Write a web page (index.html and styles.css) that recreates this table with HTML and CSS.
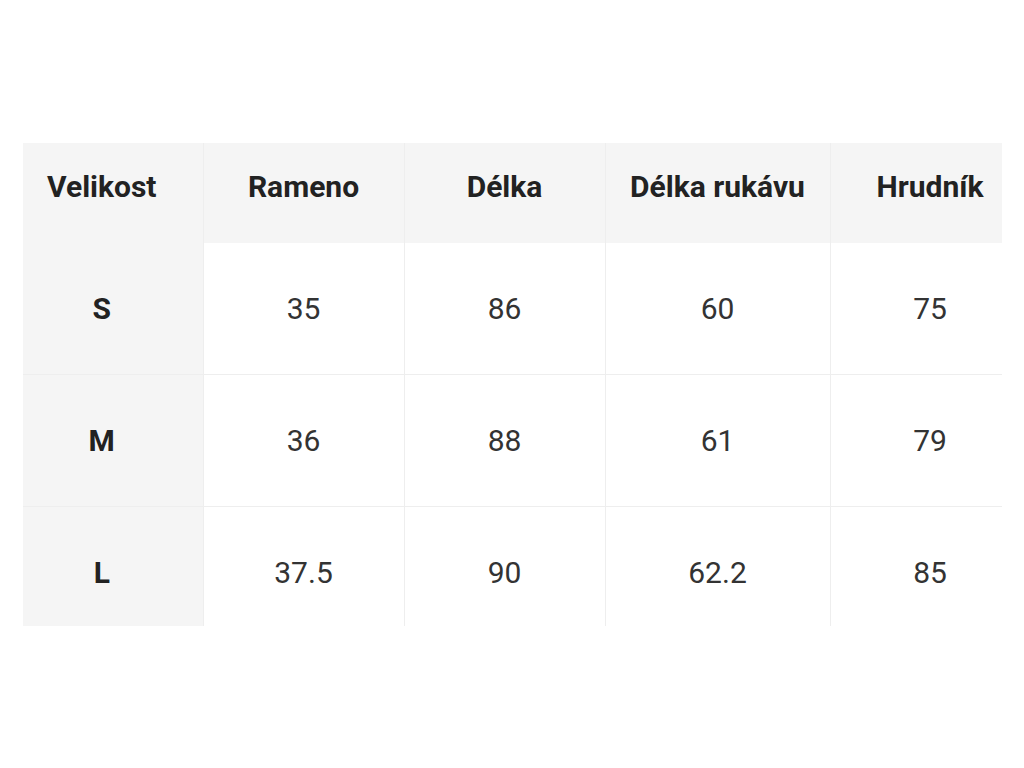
FILE: index.html
```html
<!DOCTYPE html>
<html lang="cs">
<head>
<meta charset="utf-8">
<title>Tabulka velikostí</title>
<link rel="stylesheet" href="styles.css">
</head>
<body>
<div class="page">
  <div class="table-wrap">
    <table class="sizes">
      <colgroup>
        <col class="c1"><col class="c2"><col class="c3"><col class="c4"><col class="c5">
      </colgroup>
      <thead>
        <tr>
          <th class="first">Velikost</th>
          <th>Rameno</th>
          <th>Délka</th>
          <th>Délka rukávu</th>
          <th>Hrudník</th>
        </tr>
      </thead>
      <tbody>
        <tr>
          <td class="first">S</td><td>35</td><td>86</td><td>60</td><td>75</td>
        </tr>
        <tr>
          <td class="first">M</td><td>36</td><td>88</td><td>61</td><td>79</td>
        </tr>
        <tr>
          <td class="first">L</td><td>37.5</td><td>90</td><td>62.2</td><td>85</td>
        </tr>
      </tbody>
    </table>
  </div>
</div>
</body>
</html>
```

FILE: styles.css
```css
html, body {
  margin: 0;
  padding: 0;
  background: #ffffff;
}

.page {
  padding: 143px 0 0 23px;
}

.table-wrap {
  width: 979px;
  height: 483px;
  overflow: hidden;
}

.sizes {
  border-collapse: collapse;
  table-layout: fixed;
  width: 1007px;
  font-family: Roboto, "Liberation Sans", sans-serif;
  font-size: 30px;
  color: #333333;
}

.c1 { width: 180px; }
.c2 { width: 201px; }
.c3 { width: 201px; }
.c4 { width: 225px; }
.c5 { width: 200px; }

.sizes th,
.sizes td {
  padding: 0;
  text-align: center;
  vertical-align: middle;
  border-right: 1px solid #eeeeee;
  border-bottom: 1px solid #eeeeee;
}

.sizes th {
  height: 86px;
  padding-bottom: 14px;
  background: #f5f5f5;
  font-weight: 700;
  color: #222222;
  border-bottom: none;
}

.sizes td {
  height: 131px;
}

.sizes .first {
  background: #f5f5f5;
  font-weight: 700;
  color: #222222;
  padding-right: 22px;
}
```
